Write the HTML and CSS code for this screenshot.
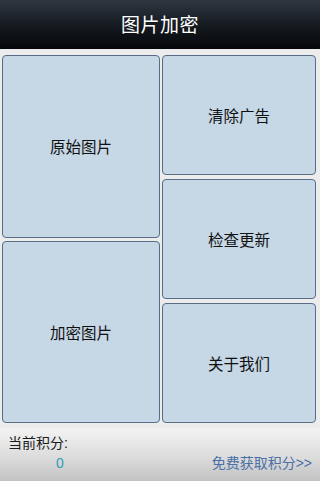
FILE: index.html
```html
<!DOCTYPE html>
<html>
<head>
  <meta charset="utf-8">
  <meta name="viewport" content="width=device-width, initial-scale=1.0">
  <link rel="stylesheet" href="styles.css">
</head>
<body>
  <div class="topBar">图片加密</div>

  <div class="menu">
    <div class="col leftCol">
      <div class="tile">原始图片</div>
      <div class="tile">加密图片</div>
    </div>
    <div class="col rightCol">
      <div class="tile">清除广告</div>
      <div class="tile">检查更新</div>
      <div class="tile">关于我们</div>
    </div>
  </div>

  <div class="footer">
    <div class="scoreLabel">当前积分:</div>
    <div class="footRow">
      <span class="score">0</span>
      <span class="getScore">免费获取积分&gt;&gt;</span>
    </div>
  </div>
</body>
</html>
```

FILE: styles.css
```css
html, body { margin: 0; padding: 0; }
body {
  background-color: #ececec;
  font-family: "Liberation Sans", "Noto Sans CJK SC", sans-serif;
  width: 320px;
  height: 481px;
  overflow: hidden;
}

.topBar {
  height: 49px;
  line-height: 52px;
  text-align: center;
  color: #ffffff;
  font-size: 19px;
  letter-spacing: 0.5px;
  background: linear-gradient(#2e3741, #161b21 50%, #05070a);
}

.menu {
  display: flex;
  gap: 2px;
  height: 368px;
  padding: 6px 4px 0 2px;
}
.col {
  display: flex;
  flex-direction: column;
}
.leftCol { width: 158px; gap: 3px; }
.rightCol { width: 154px; gap: 4px; }

.tile {
  flex: 1;
  display: flex;
  align-items: center;
  justify-content: center;
  background-color: #c6d7e5;
  border: 1px solid #5a6d88;
  border-radius: 4px;
  color: #111111;
  font-size: 15.5px;
}

.footer {
  margin-top: 5px;
  height: 53px;
  box-sizing: border-box;
  padding: 7px 8px 0 8px;
  background: linear-gradient(#f3f3f3, #dcdcdc 55%, #c2c2c2);
  font-size: 14px;
}
.scoreLabel {
  color: #1a1a1a;
  line-height: 17px;
}
.footRow {
  display: flex;
  justify-content: space-between;
  margin-top: 2px;
  line-height: 18px;
}
.score {
  color: #2f9db6;
  padding-left: 48px;
}
.getScore {
  color: #4a70a6;
}
```
